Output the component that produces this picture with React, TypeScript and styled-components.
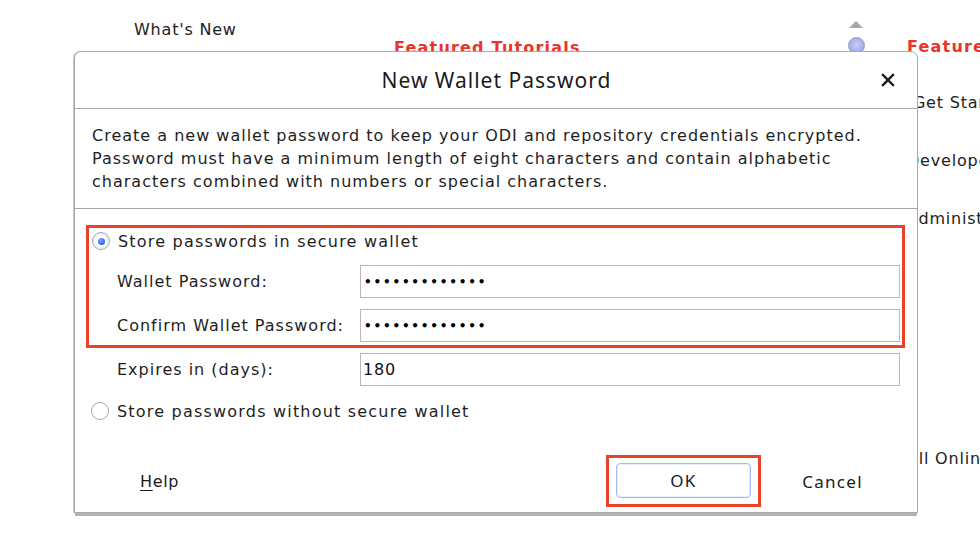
import React from "react";
import styled, { createGlobalStyle } from "styled-components";

const GlobalStyle = createGlobalStyle`
  html, body { margin: 0; padding: 0; background: #ffffff; }
  body { font-family: "DejaVu Sans", "Liberation Sans", sans-serif; color: #1e1e1e; }
  * { box-sizing: border-box; }
`;

const Page = styled.div`
  position: relative;
  width: 980px;
  height: 552px;
  overflow: hidden;
  background: #ffffff;
`;

const Backdrop = styled.div`
  display: flex;
  height: 100%;
  font-size: 16px;
`;

const BgColumn = styled.div<{ $left: number; $width: number; $top: number }>`
  margin-left: ${(p) => p.$left}px;
  width: ${(p) => p.$width}px;
  padding-top: ${(p) => p.$top}px;
  display: flex;
  flex-direction: column;
  flex-shrink: 0;
`;

const BgText = styled.div<{ $mt?: number }>`
  margin-top: ${(p) => p.$mt ?? 0}px;
  white-space: nowrap;
  line-height: 20px;
  color: #222;
  letter-spacing: 0.8px;
`;

const BgHeading = styled.div`
  color: #e8352b;
  font-weight: bold;
  white-space: nowrap;
  line-height: 20px;
  letter-spacing: 1.2px;
`;

const ScrollArrow = styled.div`
  width: 0;
  height: 0;
  margin-left: 1px;
  border-left: 7px solid transparent;
  border-right: 7px solid transparent;
  border-bottom: 7px solid #a9a9a9;
`;

const ScrollKnob = styled.div`
  width: 17px;
  height: 17px;
  margin-top: 9px;
  border-radius: 50%;
  background: radial-gradient(circle at 50% 45%, #c9cdf5 0%, #a7aef0 60%, #8f93c8 100%);
  border: 1px solid #9a9fc0;
`;

const Dialog = styled.div`
  position: absolute;
  left: 74px;
  top: 51px;
  width: 844px;
  height: 462px;
  background: #ffffff;
  border: 1px solid #a9a9a9;
  border-radius: 7px 7px 0 0;
  box-shadow: 0 4px 0 -1px #b3b3b3, -1px 0 0 #c4c4c4;
  display: flex;
  flex-direction: column;
`;

const Header = styled.div`
  position: relative;
  height: 57px;
  border-bottom: 1px solid #a9a9a9;
  display: flex;
  align-items: center;
  justify-content: center;
`;

const Title = styled.div`
  font-family: "Noto Sans", "Open Sans", sans-serif;
  font-size: 21px;
  color: #1a1a1a;
  letter-spacing: 1px;
  padding-left: 1px;
`;

const CloseButton = styled.div`
  position: absolute;
  right: 21px;
  top: 50%;
  transform: translateY(-50%);
  width: 16px;
  height: 16px;
  display: flex;
  align-items: center;
  justify-content: center;
`;

const Description = styled.div`
  padding: 15px 17px 15px 17px;
  font-size: 16px;
  line-height: 23px;
  border-bottom: 1px solid #a9a9a9;
  letter-spacing: 1px;
  white-space: nowrap;
`;

const Form = styled.div`
  padding: 16px 12px 0 11px;
  display: flex;
  flex-direction: column;
`;

const Highlight = styled.div`
  border: 3px solid #e8432a;
  padding-bottom: 3px;
  display: flex;
  flex-direction: column;
  gap: 11px;
`;

const RadioRow = styled.label<{ $inset: number; $mt?: number }>`
  display: flex;
  align-items: center;
  height: 26px;
  padding-left: ${(p) => p.$inset}px;
  margin-top: ${(p) => p.$mt ?? 0}px;
  gap: 8px;
  font-size: 16px;
  letter-spacing: 1.2px;
  white-space: nowrap;
`;

const RadioCircle = styled.span<{ $checked?: boolean }>`
  width: 18px;
  height: 18px;
  flex-shrink: 0;
  border-radius: 50%;
  border: 1px solid #a8a8a8;
  background: #fff;
  display: flex;
  align-items: center;
  justify-content: center;
  box-shadow: ${(p) => (p.$checked ? "inset 0 0 0 2px #eef2fb" : "none")};
  &::after {
    content: "";
    display: ${(p) => (p.$checked ? "block" : "none")};
    width: 7px;
    height: 7px;
    border-radius: 50%;
    background: radial-gradient(circle at 40% 35%, #7fa6ff 0%, #2f63e0 70%);
  }
`;

const FieldRow = styled.div<{ $inset: number; $mt?: number }>`
  display: grid;
  grid-template-columns: 243px 540px;
  align-items: center;
  padding-left: ${(p) => p.$inset}px;
  margin-top: ${(p) => p.$mt ?? 0}px;
  height: 33px;
`;

const Label = styled.span`
  font-size: 16px;
  letter-spacing: 1px;
  white-space: nowrap;
`;

const Field = styled.div`
  height: 33px;
  border: 1px solid #b8b8b8;
  display: flex;
  align-items: center;
  padding-left: 2px;
  font-size: 16px;
  color: #111;
  letter-spacing: 0.8px;
`;

const Secret = styled.span`
  padding-left: 1px;
  font-size: 12px;
  font-weight: bold;
  letter-spacing: 1.8px;
  color: #000;
`;

const Footer = styled.div`
  margin-top: auto;
  padding: 0 17px 5px 17px;
  display: flex;
  align-items: center;
  height: 57px;
`;

const TextButton = styled.div`
  width: 135px;
  height: 35px;
  display: flex;
  align-items: center;
  justify-content: center;
  font-family: "Noto Sans", "Open Sans", sans-serif;
  font-size: 17px;
  color: #1a1a1a;
  letter-spacing: 1.3px;
`;

const HelpButton = styled(TextButton)`
  font-family: "DejaVu Sans", sans-serif;
  font-size: 16px;
  letter-spacing: 0.6px;
  u { text-decoration-thickness: 1px; text-underline-offset: 3px; }
`;

const OkFrame = styled.div`
  margin-left: auto;
  border: 3px solid #e8432a;
  padding: 5px 7px 6px 7px;
`;

const OkButton = styled(TextButton)`
  border: 1px solid #a6b8f2;
  border-radius: 4px;
  box-shadow: inset 0 0 0 1px #e9eefc;
  background: #fff;
`;

const Cancel = styled(TextButton)`
  margin-left: 4px;
`;

export default function App() {
  return (
    <>
      <GlobalStyle />
      <Page>
        <Backdrop>
          <BgColumn $left={134} $width={180} $top={20}>
            <BgText>What's New</BgText>
          </BgColumn>
          <BgColumn $left={80} $width={300} $top={38}>
            <BgHeading>Featured Tutorials</BgHeading>
          </BgColumn>
          <BgColumn $left={154} $width={59} $top={21}>
            <ScrollArrow />
            <ScrollKnob />
          </BgColumn>
          <BgColumn $left={0} $width={120} $top={37}>
            <BgHeading>Featured</BgHeading>
            <BgText $mt={36}>&nbsp;Get Started</BgText>
            <BgText $mt={38}>Developer</BgText>
            <BgText $mt={38}>Administrator</BgText>
            <BgText $mt={220}>All Online</BgText>
          </BgColumn>
        </Backdrop>

        <Dialog>
          <Header>
            <Title>New Wallet Password</Title>
            <CloseButton>
              <svg width="14" height="14" viewBox="0 0 14 14">
                <path d="M2 2 L12 12 M12 2 L2 12" stroke="#1a1a1a" strokeWidth="2.4" strokeLinecap="square" />
              </svg>
            </CloseButton>
          </Header>
          <Description>
            Create a new wallet password to keep your ODI and repository credentials encrypted.
            <br />
            Password must have a minimum length of eight characters and contain alphabetic
            <br />
            characters combined with numbers or special characters.
          </Description>
          <Form>
            <Highlight>
              <RadioRow $inset={3}>
                <RadioCircle $checked />
                Store passwords in secure wallet
              </RadioRow>
              <FieldRow $inset={28}>
                <Label>Wallet Password:</Label>
                <Field>
                  <Secret>•••••••••••••</Secret>
                </Field>
              </FieldRow>
              <FieldRow $inset={28}>
                <Label>Confirm Wallet Password:</Label>
                <Field>
                  <Secret>•••••••••••••</Secret>
                </Field>
              </FieldRow>
            </Highlight>
            <FieldRow $inset={31} $mt={5}>
              <Label>Expires in (days):</Label>
              <Field>180</Field>
            </FieldRow>
            <RadioRow $inset={5} $mt={12}>
              <RadioCircle />
              Store passwords without secure wallet
            </RadioRow>
          </Form>
          <Footer>
            <HelpButton>
              <span>
                <u>H</u>elp
              </span>
            </HelpButton>
            <OkFrame>
              <OkButton>OK</OkButton>
            </OkFrame>
            <Cancel>Cancel</Cancel>
          </Footer>
        </Dialog>
      </Page>
    </>
  );
}
